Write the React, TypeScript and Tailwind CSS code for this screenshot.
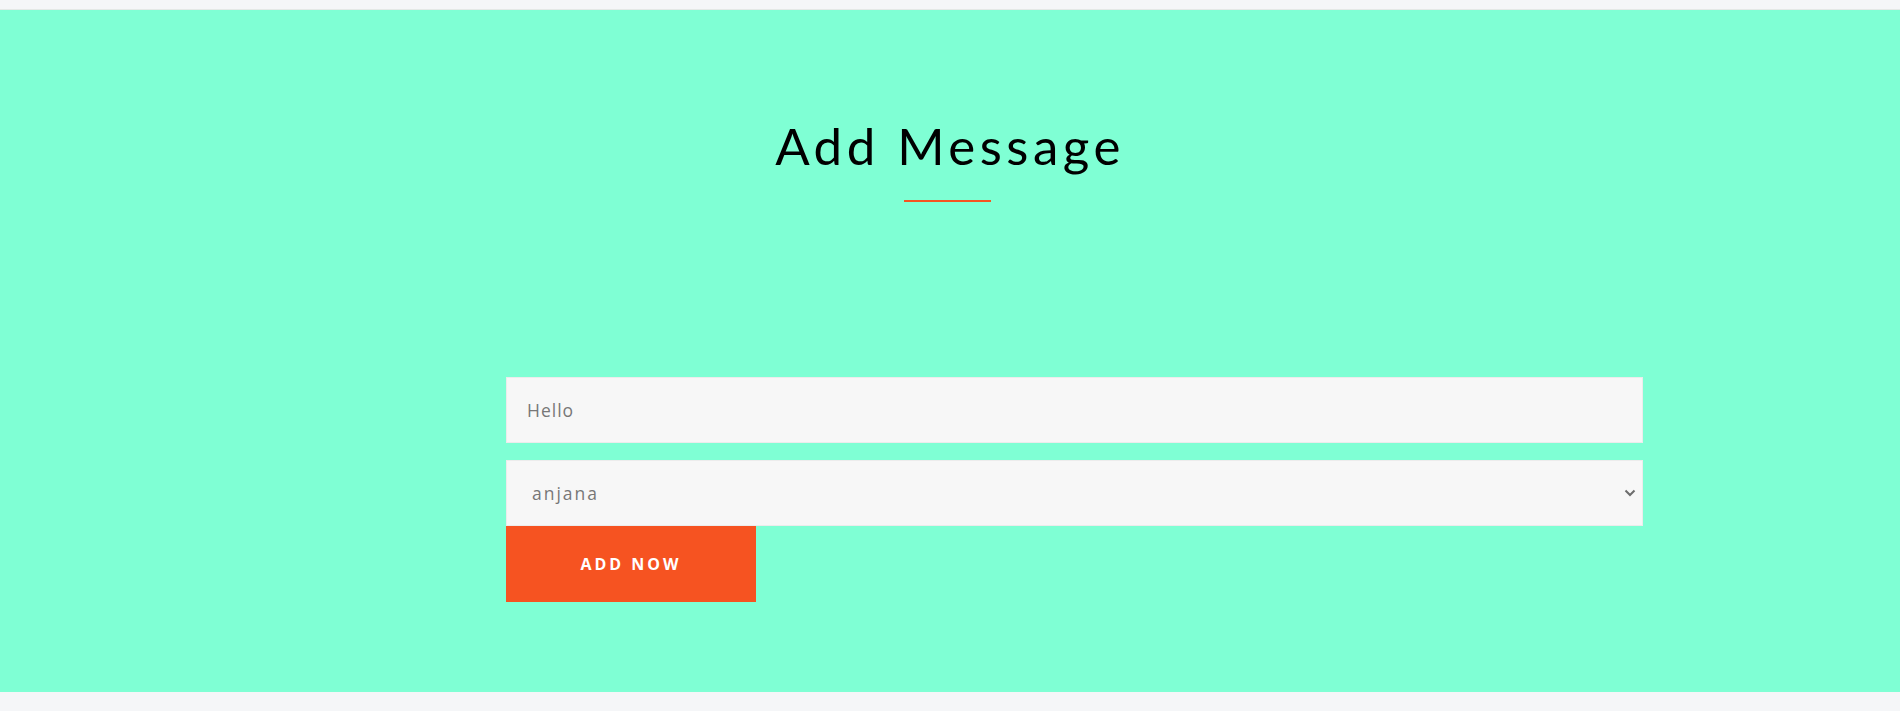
import React from "react";

export default function App() {
  return (
    <div className="min-h-[711px] bg-[#f5f6f8] pt-[9px]">
      <div className="h-[683px] bg-[#7fffd4] border-t border-t-[#e4e8e6] flex flex-col">
        <div className="pt-[106px] flex flex-col items-center">
          <h1
            className="text-[51px] leading-[60px] text-black tracking-[4.5px] font-normal"
            style={{ fontFamily: "Lato, 'Open Sans', sans-serif" }}
          >
            Add Message
          </h1>
          <div className="mt-[24px] w-[87px] h-[2px] bg-[#f65321] -ml-[6px]" />
        </div>
        <div
          className="mt-[175px] ml-[506px] w-[1137px] flex flex-col"
          style={{ fontFamily: "'Open Sans', Lato, sans-serif" }}
        >
          <div className="h-[66px] bg-[#f7f7f7] border border-[#ececec] flex items-center pl-[20px] text-[17.5px] tracking-[1px] text-[#777777]">
            Hello
          </div>
          <div className="mt-[17px] h-[66px] bg-[#f7f7f7] border border-[#ececec] flex items-center justify-between pl-[25px] pr-[6px] text-[17.5px] tracking-[2px] text-[#777777]">
            <span>anjana</span>
            <svg width="12" height="8" viewBox="0 0 12 8">
              <path d="M1.5 1.5 L6 6 L10.5 1.5" fill="none" stroke="#6d6d6d" strokeWidth="2" />
            </svg>
          </div>
          <button className="w-[250px] h-[76px] bg-[#f65321] text-white font-bold text-[16px] tracking-[3px] flex items-center justify-center">
            ADD NOW
          </button>
        </div>
      </div>
    </div>
  );
}
